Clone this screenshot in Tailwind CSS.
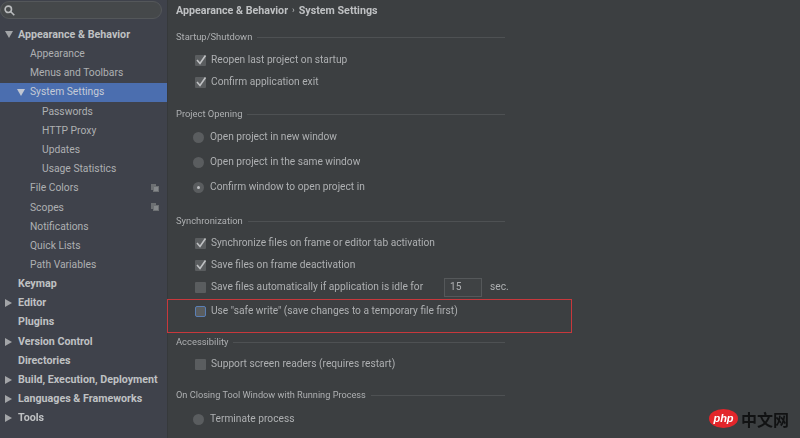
<!DOCTYPE html>
<html lang="en">
<head>
    <meta charset="UTF-8">
    <title>Settings - System Settings</title>
    <script src="https://cdn.jsdelivr.net/npm/@tailwindcss/browser@4"></script>
</head>
<body class="w-[800px] h-[438px] overflow-hidden bg-[#3c3f41] font-['Roboto',sans-serif] text-[10.2px] text-[#aeb0b2] whitespace-nowrap">
<div class="relative flex w-[800px] h-[438px] overflow-hidden blur-[0.3px]">

    <!-- Sidebar -->
    <aside class="w-[167px] h-full shrink-0 bg-[#3f424b] border-r border-[#36393b] box-content text-[10.3px]">
        <div class="flex items-center h-[18px] w-[162px] mt-[1px] rounded-full bg-[#45484a] border border-[#54575a] pl-[3px]">
            <svg width="11" height="11" viewBox="0 0 11 11" fill="none" stroke="#b9bbbd" stroke-width="1.6"><circle cx="4.3" cy="4.3" r="3.2"/><path d="M6.8 6.8 10.3 10.3"/></svg>
        </div>
        <ul class="mt-[6px]">
            <li class="flex items-center h-[19.2px] pl-[5px] text-[10.7px] font-bold text-[#bfc1c3]"><svg class="w-[8px] mr-[5px]" height="7" viewBox="0 0 8 7"><path d="M0 0H8L4 7Z" fill="#a3a5a8"/></svg>Appearance &amp; Behavior</li>
            <li class="flex items-center h-[19.2px] pl-[30px]">Appearance</li>
            <li class="flex items-center h-[19.2px] pl-[30px]">Menus and Toolbars</li>
            <li class="flex items-center h-[19.2px] pl-[17px] bg-[#4b6eaf] text-[#c5cbd6]"><svg class="w-[8px] mr-[5px]" height="7" viewBox="0 0 8 7"><path d="M0 0H8L4 7Z" fill="#c0c6d2"/></svg>System Settings</li>
            <li class="flex items-center h-[19.2px] pl-[42px]">Passwords</li>
            <li class="flex items-center h-[19.2px] pl-[42px]">HTTP Proxy</li>
            <li class="flex items-center h-[19.2px] pl-[42px]">Updates</li>
            <li class="flex items-center h-[19.2px] pl-[42px]">Usage Statistics</li>
            <li class="flex items-center justify-between h-[19.2px] pl-[30px] pr-[8px]">File Colors<svg width="8" height="8" viewBox="0 0 8 8" fill="#6d7073"><path d="M0 0H5V2H8V8H2V6H0Z"/><path d="M3 3H7V7H3Z" fill="#85888b"/></svg></li>
            <li class="flex items-center justify-between h-[19.2px] pl-[30px] pr-[8px]">Scopes<svg width="8" height="8" viewBox="0 0 8 8" fill="#6d7073"><path d="M0 0H5V2H8V8H2V6H0Z"/><path d="M3 3H7V7H3Z" fill="#85888b"/></svg></li>
            <li class="flex items-center h-[19.2px] pl-[30px]">Notifications</li>
            <li class="flex items-center h-[19.2px] pl-[30px]">Quick Lists</li>
            <li class="flex items-center h-[19.2px] pl-[30px]">Path Variables</li>
            <li class="flex items-center h-[19.2px] pl-[18px] text-[10.7px] font-bold text-[#bfc1c3]">Keymap</li>
            <li class="flex items-center h-[19.2px] pl-[5px] text-[10.7px] font-bold text-[#bfc1c3]"><svg class="w-[7px] mr-[6px]" height="8" viewBox="0 0 7 8"><path d="M0 0 7 4 0 8Z" fill="#a3a5a8"/></svg>Editor</li>
            <li class="flex items-center h-[19.2px] pl-[18px] text-[10.7px] font-bold text-[#bfc1c3]">Plugins</li>
            <li class="flex items-center h-[19.2px] pl-[5px] text-[10.7px] font-bold text-[#bfc1c3]"><svg class="w-[7px] mr-[6px]" height="8" viewBox="0 0 7 8"><path d="M0 0 7 4 0 8Z" fill="#a3a5a8"/></svg>Version Control</li>
            <li class="flex items-center h-[19.2px] pl-[18px] text-[10.7px] font-bold text-[#bfc1c3]">Directories</li>
            <li class="flex items-center h-[19.2px] pl-[5px] text-[10.7px] font-bold text-[#bfc1c3]"><svg class="w-[7px] mr-[6px]" height="8" viewBox="0 0 7 8"><path d="M0 0 7 4 0 8Z" fill="#a3a5a8"/></svg>Build, Execution, Deployment</li>
            <li class="flex items-center h-[19.2px] pl-[5px] text-[10.7px] font-bold text-[#bfc1c3]"><svg class="w-[7px] mr-[6px]" height="8" viewBox="0 0 7 8"><path d="M0 0 7 4 0 8Z" fill="#a3a5a8"/></svg>Languages &amp; Frameworks</li>
            <li class="flex items-center h-[19.2px] pl-[5px] text-[10.7px] font-bold text-[#bfc1c3]"><svg class="w-[7px] mr-[6px]" height="8" viewBox="0 0 7 8"><path d="M0 0 7 4 0 8Z" fill="#a3a5a8"/></svg>Tools</li>
        </ul>
    </aside>

    <!-- Contenido -->
    <main class="flex-1 pl-[8px] pt-[1px]">
        <div class="flex items-center h-5 text-[10.7px] font-bold text-[#bfc1c3]">Appearance &amp; Behavior<span class="mx-[4px] font-normal text-[9px]">›</span>System Settings</div>

        <div class="flex items-center gap-[5px] w-[329px] h-4 mt-[8px] text-[9.4px]">Startup/Shutdown<span class="flex-1 h-px bg-[#4e5153]"></span></div>
        <label class="flex items-center h-5 mt-[5px] pl-[19px] gap-[5px]"><span class="flex items-center justify-center w-[11px] h-[11px] bg-[#5a5d5f] rounded-[1px]"><svg width="12" height="12" viewBox="0 0 12 12" class="shrink-0"><path d="M2 6 5 9.5 10.5 1.5" fill="none" stroke="#bfc1c3" stroke-width="1.6"/></svg></span>Reopen last project on startup</label>
        <label class="flex items-center h-5 mt-[2px] pl-[19px] gap-[5px]"><span class="flex items-center justify-center w-[11px] h-[11px] bg-[#5a5d5f] rounded-[1px]"><svg width="12" height="12" viewBox="0 0 12 12" class="shrink-0"><path d="M2 6 5 9.5 10.5 1.5" fill="none" stroke="#bfc1c3" stroke-width="1.6"/></svg></span>Confirm application exit</label>

        <div class="flex items-center gap-[5px] w-[329px] h-4 mt-[14px] text-[9.4px]">Project Opening<span class="flex-1 h-px bg-[#4e5153]"></span></div>
        <label class="flex items-center h-5 mt-[5px] pl-[17px] gap-[6px]"><span class="w-[11px] h-[11px] rounded-full bg-[#5a5d5f]"></span>Open project in new window</label>
        <label class="flex items-center h-5 mt-[5px] pl-[17px] gap-[6px]"><span class="w-[11px] h-[11px] rounded-full bg-[#5a5d5f]"></span>Open project in the same window</label>
        <label class="flex items-center h-5 mt-[5px] pl-[17px] gap-[6px]"><span class="flex items-center justify-center w-[11px] h-[11px] rounded-full bg-[#5a5d5f]"><span class="w-[3px] h-[3px] rounded-full bg-[#bfc1c3]"></span></span>Confirm window to open project in</label>

        <div class="flex items-center gap-[5px] w-[329px] h-4 mt-[16px] text-[9.4px]">Synchronization<span class="flex-1 h-px bg-[#4e5153]"></span></div>
        <label class="flex items-center h-5 mt-[4px] pl-[19px] gap-[5px]"><span class="flex items-center justify-center w-[11px] h-[11px] bg-[#5a5d5f] rounded-[1px]"><svg width="12" height="12" viewBox="0 0 12 12" class="shrink-0"><path d="M2 6 5 9.5 10.5 1.5" fill="none" stroke="#bfc1c3" stroke-width="1.6"/></svg></span>Synchronize files on frame or editor tab activation</label>
        <label class="flex items-center h-5 mt-[2px] pl-[19px] gap-[5px]"><span class="flex items-center justify-center w-[11px] h-[11px] bg-[#5a5d5f] rounded-[1px]"><svg width="12" height="12" viewBox="0 0 12 12" class="shrink-0"><path d="M2 6 5 9.5 10.5 1.5" fill="none" stroke="#bfc1c3" stroke-width="1.6"/></svg></span>Save files on frame deactivation</label>
        <label class="flex items-center h-5 mt-[2px] pl-[19px] gap-[5px]"><span class="w-[11px] h-[11px] bg-[#5a5d5f] rounded-[1px]"></span><span class="w-[228px]">Save files automatically if application is idle for</span><span class="flex items-center w-[38px] h-[19px] pl-[5px] bg-[#3f4244] border border-[#55585a]">15</span><span class="ml-[3px]">sec.</span></label>
        <label class="flex items-center h-5 mt-[4px] pl-[19px] gap-[5px]"><span class="w-[11px] h-[11px] bg-[#5a5d5f] rounded-[2px] border-[1.5px] border-[#5a7fb5]"></span>Use "safe write" (save changes to a temporary file first)</label>

        <div class="flex items-center gap-[5px] w-[329px] h-4 mt-[13px] text-[9.4px]">Accessibility<span class="flex-1 h-px bg-[#4e5153]"></span></div>
        <label class="flex items-center h-5 mt-[4px] pl-[19px] gap-[5px]"><span class="w-[11px] h-[11px] bg-[#5a5d5f] rounded-[1px]"></span>Support screen readers (requires restart)</label>

        <div class="flex items-center gap-[5px] w-[329px] h-4 mt-[13px] text-[9.2px]">On Closing Tool Window with Running Process<span class="flex-1 h-px bg-[#4e5153]"></span></div>
        <label class="flex items-center h-5 mt-[6px] pl-[17px] gap-[6px]"><span class="w-[11px] h-[11px] rounded-full bg-[#5a5d5f]"></span>Terminate process</label>
    </main>

    <!-- Recuadro rojo -->
    <div class="absolute left-[167px] top-[299px] w-[405px] h-[34px] border border-[#c8383c]"></div>

    <!-- Marca de agua -->
    <div class="absolute left-[709px] top-[409px] flex items-center gap-[3px]">
        <span class="flex items-center justify-center w-[29px] h-[19px] rounded-[50%] bg-[#e3262b] text-white text-[11px] italic font-bold font-['Liberation_Sans',sans-serif]">php</span>
        <span class="text-[#111213] text-[16px] font-bold leading-none font-['Noto_Sans_CJK_SC',sans-serif]">中文网</span>
    </div>
</div>
</body>
</html>
